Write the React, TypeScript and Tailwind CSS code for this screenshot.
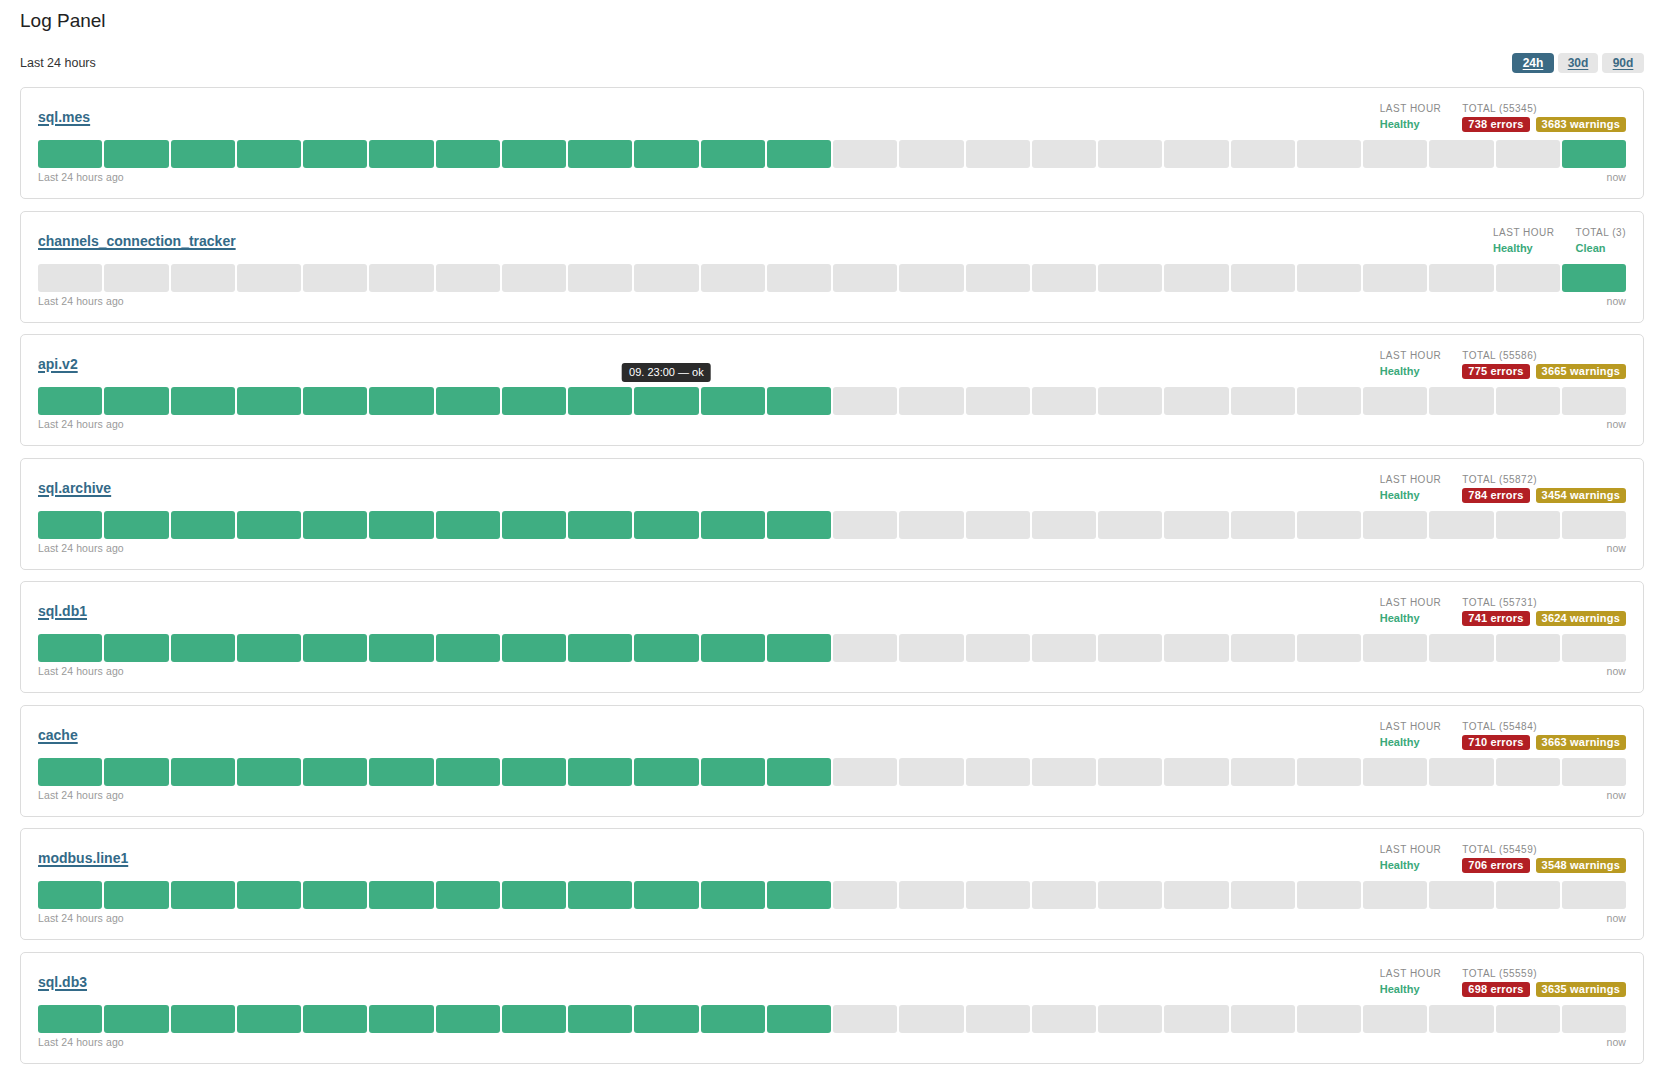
import React from "react";

type Row = {
  name: string;
  total: number;
  errors?: number;
  warnings?: number;
  pattern: "normal" | "last";
  tooltip?: boolean;
};

const rows: Row[] = [
  { name: "sql.mes", total: 55345, errors: 738, warnings: 3683, pattern: "normal" },
  { name: "channels_connection_tracker", total: 3, pattern: "last" },
  { name: "api.v2", total: 55586, errors: 775, warnings: 3665, pattern: "normal", tooltip: true },
  { name: "sql.archive", total: 55872, errors: 784, warnings: 3454, pattern: "normal" },
  { name: "sql.db1", total: 55731, errors: 741, warnings: 3624, pattern: "normal" },
  { name: "cache", total: 55484, errors: 710, warnings: 3663, pattern: "normal" },
  { name: "modbus.line1", total: 55459, errors: 706, warnings: 3548, pattern: "normal" },
  { name: "sql.db3", total: 55559, errors: 698, warnings: 3635, pattern: "normal" },
];

function isGreen(row: Row, i: number, idx: number) {
  if (row.pattern === "last") return i === 23;
  if (i < 12) return true;
  if (i === 23 && idx === 0) return true;
  return false;
}

function Card({ row, idx }: { row: Row; idx: number }) {
  return (
    <div className="rounded-[5px] border border-[#dcdcdc] bg-white px-[17px] pt-[14px] pb-[14px]">
      <div className="flex items-center justify-between">
        <a className="text-[14px] font-bold text-[#336a88] underline underline-offset-2 decoration-[1.5px] leading-[18px]">
          {row.name}
        </a>
        <div className="flex gap-[21px]">
          <div className="flex flex-col">
            <div className="text-[10px] leading-[13px] tracking-[0.5px] text-[#8a8a8a]">LAST HOUR</div>
            <div className="mt-[2px] text-[11px] font-bold leading-[15px] text-[#3aa97a]">Healthy</div>
          </div>
          <div className="flex flex-col">
            <div className="text-[10px] leading-[13px] tracking-[0.5px] text-[#8a8a8a]">TOTAL ({row.total})</div>
            {row.errors !== undefined ? (
              <div className="mt-[2px] flex gap-[6px]">
                <span className="rounded-[3px] bg-[#b21f24] px-[6px] text-[11px] font-bold leading-[15px] tracking-[0.2px] text-white">
                  {row.errors} errors
                </span>
                <span className="rounded-[3px] bg-[#b99a22] px-[6px] text-[11px] font-bold leading-[15px] tracking-[0.2px] text-white">
                  {row.warnings} warnings
                </span>
              </div>
            ) : (
              <div className="mt-[2px] text-[11px] font-bold leading-[15px] text-[#3aa97a]">Clean</div>
            )}
          </div>
        </div>
      </div>
      <div className="mt-[8px] flex gap-[2px]">
        {Array.from({ length: 24 }).map((_, i) => (
          <div
            key={i}
            className={
              "relative h-[28px] flex-1 rounded-[3px] " +
              (isGreen(row, i, idx) ? "bg-[#3fae82]" : "bg-[#e4e4e4]")
            }
          >
            {row.tooltip && i === 9 ? (
              <div className="absolute bottom-full left-1/2 mb-[5px] -translate-x-1/2 whitespace-nowrap rounded-[3px] bg-[#2b2b2b] px-[7px] text-[11px] leading-[19px] text-white">
                09. 23:00 — ok
              </div>
            ) : null}
          </div>
        ))}
      </div>
      <div className="mt-[3px] flex justify-between text-[10.5px] leading-[13px] tracking-[0.1px] text-[#9a9a9a]">
        <span>Last 24 hours ago</span>
        <span>now</span>
      </div>
    </div>
  );
}

export default function App() {
  return (
    <div
      className="min-h-screen bg-white pl-5 pr-[25px] pt-[8px] pb-5 text-[#222]"
      style={{ fontFamily: '"Liberation Sans", Arial, sans-serif' }}
    >
      <h1 className="text-[19px] leading-[26px] font-normal text-[#222]">Log Panel</h1>
      <div className="mt-[19px] flex items-center justify-between">
        <div className="text-[12.5px] text-[#333]">Last 24 hours</div>
        <div className="flex gap-[4px]">
          <button className="h-[20px] w-[42px] rounded-[4px] bg-[#3b6a84] text-[12px] font-bold text-white underline underline-offset-2">
            24h
          </button>
          <button className="h-[20px] w-[40px] rounded-[4px] bg-[#e6e6e6] text-[12px] font-bold text-[#3b6a84] underline underline-offset-2">
            30d
          </button>
          <button className="h-[20px] w-[42px] rounded-[4px] bg-[#e6e6e6] text-[12px] font-bold text-[#3b6a84] underline underline-offset-2">
            90d
          </button>
        </div>
      </div>
      <div className="mt-[14px] flex flex-col gap-[11.5px]">
        {rows.map((r, i) => (
          <Card key={r.name} row={r} idx={i} />
        ))}
      </div>
    </div>
  );
}
